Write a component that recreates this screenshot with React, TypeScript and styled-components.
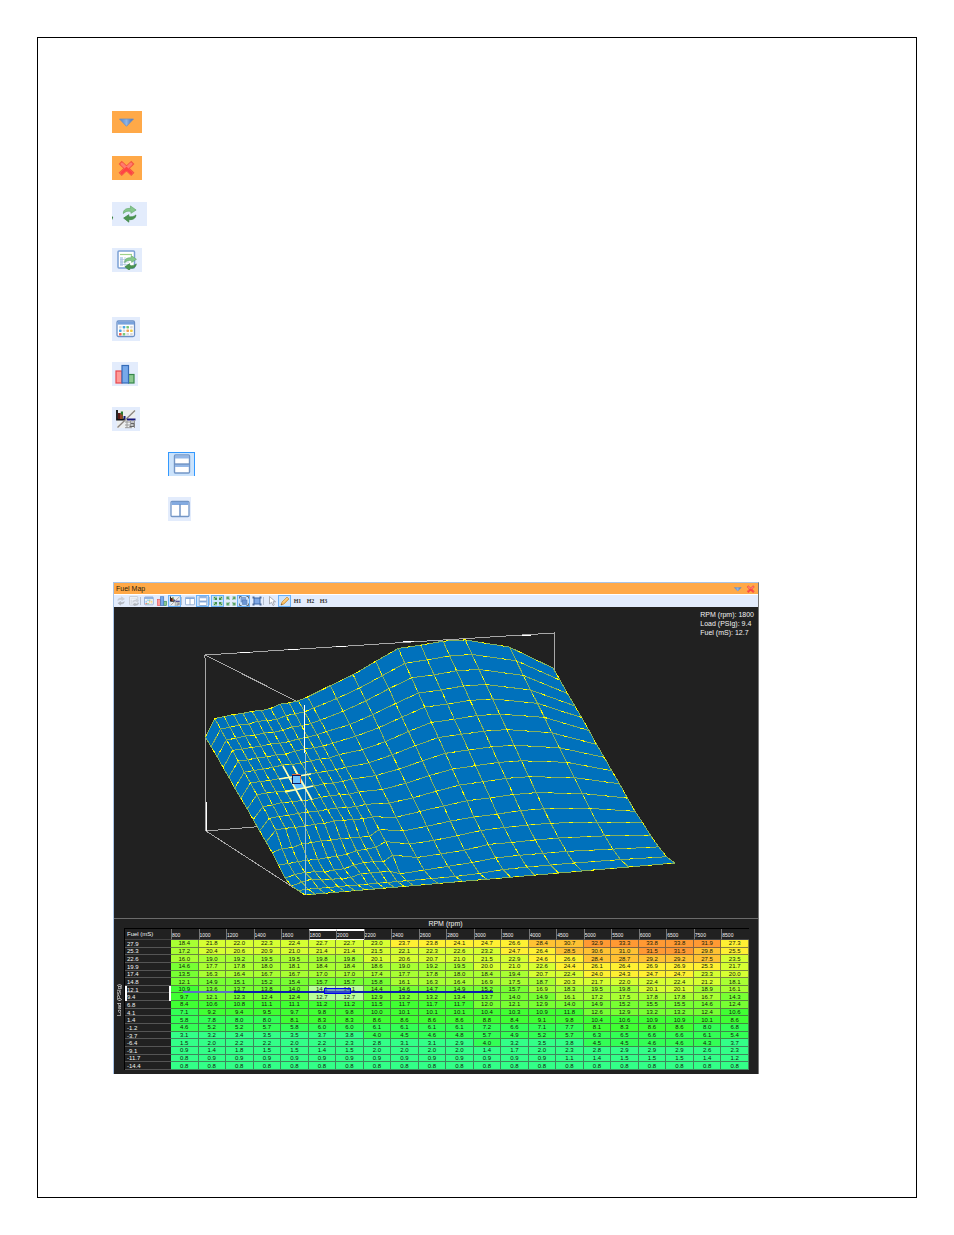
import React from "react";
import styled, { createGlobalStyle } from "styled-components";

const GlobalStyle = createGlobalStyle`
  * { box-sizing: border-box; }
  body { margin: 0; background: #fff; font-family: "Liberation Sans", Arial, sans-serif; }
`;

/* ---------- Data ---------- */

const RPM = [800, 1000, 1200, 1400, 1600, 1800, 2000, 2200, 2400, 2600, 2800, 3000, 3500, 4000, 4500, 5000, 5500, 6000, 6500, 7500, 8500];
const LOAD = [27.9, 25.3, 22.6, 19.9, 17.4, 14.8, 12.1, 9.4, 6.8, 4.1, 1.4, -1.2, -3.7, -6.4, -9.1, -11.7, -14.4];

const FUEL = `18.4 21.8 22.0 22.3 22.4 22.7 22.7 23.0 23.7 23.8 24.1 24.7 26.6 28.4 30.7 32.9 33.3 33.8 33.8 31.9 27.3
17.2 20.4 20.6 20.9 21.0 21.4 21.4 21.5 22.1 22.3 22.6 23.2 24.7 26.4 28.5 30.6 31.0 31.5 31.5 29.8 25.5
16.0 19.0 19.2 19.5 19.5 19.8 19.8 20.1 20.6 20.7 21.0 21.5 22.9 24.6 26.6 28.4 28.7 29.2 29.2 27.5 23.5
14.6 17.7 17.8 18.0 18.1 18.4 18.4 18.6 19.0 19.2 19.5 20.0 21.0 22.6 24.4 26.1 26.4 26.9 26.9 25.3 21.7
13.5 16.3 16.4 16.7 16.7 17.0 17.0 17.4 17.7 17.8 18.0 18.4 19.4 20.7 22.4 24.0 24.3 24.7 24.7 23.3 20.0
12.1 14.9 15.1 15.2 15.4 15.7 15.7 15.8 16.1 16.3 16.4 16.9 17.5 18.7 20.3 21.7 22.0 22.4 22.4 21.2 18.1
10.9 13.6 13.7 13.8 14.0 14.1 14.1 14.4 14.6 14.7 14.9 15.2 15.7 16.9 18.3 19.5 19.8 20.1 20.1 18.9 16.1
9.7 12.1 12.3 12.4 12.4 12.7 12.7 12.9 13.2 13.2 13.4 13.7 14.0 14.9 16.1 17.2 17.5 17.8 17.8 16.7 14.3
8.4 10.6 10.8 11.1 11.1 11.2 11.2 11.5 11.7 11.7 11.7 12.0 12.1 12.9 14.0 14.9 15.2 15.5 15.5 14.6 12.4
7.1 9.2 9.4 9.5 9.7 9.8 9.8 10.0 10.1 10.1 10.1 10.4 10.3 10.9 11.8 12.6 12.9 13.2 13.2 12.4 10.6
5.8 7.8 8.0 8.0 8.1 8.3 8.3 8.6 8.6 8.6 8.6 8.8 8.4 9.1 9.8 10.4 10.6 10.9 10.9 10.1 8.6
4.6 5.2 5.2 5.7 5.8 6.0 6.0 6.1 6.1 6.1 6.1 7.2 6.6 7.1 7.7 8.1 8.3 8.6 8.6 8.0 6.8
3.1 3.2 3.4 3.5 3.5 3.7 3.8 4.0 4.5 4.6 4.8 5.7 4.9 5.2 5.7 6.3 6.5 6.6 6.6 6.1 5.4
1.5 2.0 2.2 2.2 2.0 2.2 2.3 2.8 3.1 3.1 2.9 4.0 3.2 3.5 3.8 4.5 4.5 4.6 4.6 4.3 3.7
0.9 1.4 1.8 1.5 1.5 1.4 1.5 2.0 2.0 2.0 2.0 1.4 1.7 2.0 2.3 2.8 2.9 2.9 2.9 2.6 2.3
0.8 0.9 0.9 0.9 0.9 0.9 0.9 0.9 0.9 0.9 0.9 0.9 0.9 0.9 1.1 1.4 1.5 1.5 1.5 1.4 1.2
0.8 0.8 0.8 0.8 0.8 0.8 0.8 0.8 0.8 0.8 0.8 0.8 0.8 0.8 0.8 0.8 0.8 0.8 0.8 0.8 0.8`
  .split("\n")
  .map((row) => row.trim().split(" "));

const BANDS: [number, string][] = [
  [31.3, "#ff9933"],
  [27.4, "#ffc233"],
  [23.6, "#fff033"],
  [19.9, "#d6ff33"],
  [15.9, "#a8ff33"],
  [12, "#77ff33"],
  [8.1, "#40ff33"],
  [3.9, "#33ff55"],
];
const heat = (v: number) => (BANDS.find(([min]) => v >= min) ?? [0, "#33ff88"])[1] as string;

const isLiveColumn = (c: number) => c === 5 || c === 6;
const isLiveRow = (r: number) => r === 6 || r === 7;

/* ---------- Icons ---------- */

type IconProps = { size?: number };
const Svg = styled.svg`
  display: block;
  flex: none;
`;

const CollapseIcon = ({ size = 20 }: IconProps) => (
  <Svg width={size} height={size} viewBox="0 0 20 20" aria-hidden>
    <defs>
      <linearGradient id="tri" x1="0" x2="1">
        <stop offset="0" stopColor="#4d84cf" />
        <stop offset=".5" stopColor="#8db4e6" />
        <stop offset="1" stopColor="#3f66ae" />
      </linearGradient>
    </defs>
    <path d="M2.5 7H16.500L9.500 14.300Z" fill="url(#tri)" stroke="#6f8fc0" strokeWidth=".8" />
  </Svg>
);
const CloseIcon = ({ size = 20 }: IconProps) => (
  <Svg width={size} height={size} viewBox="0 0 20 20" aria-hidden>
    <path d="M4.8 6L14.2 14.800M14.2 6L4.8 14.800" stroke="#f4573f" strokeWidth="4.600" strokeLinecap="square" />
    <path d="M5 6L14 14.800M14 6L5 14.800" stroke="#ff7a6e" strokeWidth="3" strokeLinecap="round" />
    <path d="M9.500 10.400L14 14.800M9.500 10.400L5 14.800" stroke="#ff4343" strokeWidth="2.800" strokeLinecap="round" />
  </Svg>
);
const Arrows = () => (
  <>
    <path d="M3.5 9.5C3.5 5 7 3.8 11 4.2V1.5L17 5.8L11.5 9.3V7.2C8 6.8 6.2 7 3.5 9.5Z" fill="#86c88c" stroke="#62a86b" strokeWidth=".7" />
    <path d="M16.8 11C16.5 15 13 16.3 9.3 15.9V18.6L3.8 14.3L9.3 10.7V12.9C12.3 13.2 14.3 13 16.8 11Z" fill="#4c9550" stroke="#37803f" strokeWidth=".7" />
  </>
);
const RefreshIcon = ({ size = 20 }: IconProps) => (
  <Svg width={size} height={size} viewBox="0 0 20 20" aria-hidden>
    <Arrows />
  </Svg>
);
/* Refresh arrows with the tip of the neighbouring glyph showing at the left edge. */
const RefreshStrip = () => (
  <Svg width="35" height="24" viewBox="0 0 35 24" aria-hidden>
    <path d="M0 14L1.200 15.500L0 18Z" fill="#37803f" />
    <g transform="translate(8 2.500) scale(.95)">
      <Arrows />
    </g>
  </Svg>
);
const TableRefreshIcon = ({ size = 20 }: IconProps) => (
  <Svg width={size} height={size} viewBox="0 0 20 20" aria-hidden>
    <rect x="1" y="1" width="16.500" height="17" rx="1" fill="#fff" stroke="#7ba0d4" strokeWidth="1.500" />
    <path d="M3 4.500H15" stroke="#9fd18b" strokeWidth="1.200" />
    <path d="M3 7H6V16H3Z" fill="#c3d6ef" />
    <path d="M3 9.500H12M3 12H12M3 14.500H12M8 7V16" stroke="#a9c0e0" strokeWidth=".7" />
    <g transform="translate(4.500 4.200) scale(.88)">
      <Arrows />
    </g>
  </Svg>
);
const GridIcon = ({ size = 20 }: IconProps) => {
  const dots = ["#d9d9d9", "#47a5e4", "#78c878", "#d9d9d9", "#47a5e4", "#dcdcdc", "#f2a04e", "#f0cc3e", "#f26450", "#78c878", "#dcdcdc", "#d9d9d9"];
  return (
    <Svg width={size} height={size} viewBox="0 0 20 20" aria-hidden>
      <rect x="1" y="2" width="17.500" height="15.500" rx="1.500" fill="#fff" stroke="#6c90c6" strokeWidth="1.300" />
      <path d="M1.500 2.600H18V5.600H1.500Z" fill="#78a2dc" />
      {dots.map((c, i) => (
        <rect key={i} x={3 + (i % 4) * 3.7} y={7 + Math.floor(i / 4) * 3.5} width="2.600" height="2.400" rx=".6" fill={c} />
      ))}
    </Svg>
  );
};
const BarsIcon = ({ size = 20 }: IconProps) => (
  <Svg width={size} height={size} viewBox="0 0 20 20" aria-hidden>
    <rect x="1" y="7" width="6" height="12" fill="#ff9a97" stroke="#e8474d" strokeWidth="1.200" />
    <rect x="13.500" y="10.500" width="5.500" height="8.500" fill="#8cc98f" stroke="#36874a" strokeWidth="1.200" />
    <rect x="7" y="1.500" width="6.500" height="17.500" fill="#77a9ea" stroke="#356cb8" strokeWidth="1.200" />
  </Svg>
);
const SplitChartIcon = ({ size = 20 }: IconProps) => (
  <Svg width={size} height={size} viewBox="0 0 20 20" aria-hidden>
    <rect x="1" y="1" width="18" height="18" fill="#eceeef" />
    <path d="M1 1V10.500H9" fill="none" stroke="#111" strokeWidth="1.800" />
    <rect x="2" y="4" width="2.800" height="6" fill="#5b1a14" />
    <rect x="4.800" y="2.500" width="2.200" height="7.500" fill="#287a2c" />
    <rect x="4" y="5.500" width="2.600" height="4.500" fill="#9c4426" />
    <rect x="7.500" y="7" width="2" height="3.500" fill="#141a70" />
    <path d="M1.500 18.500L19 1.500" stroke="#8b8580" strokeWidth="1.300" />
    <path d="M11 10.500H19.500" stroke="#16167d" strokeWidth="2" />
    <path d="M9 13H19M9 16H19M11 11V19M14.500 11V19M18.500 11V19M9 18.700H16" stroke="#9a9a9a" strokeWidth="1" />
    <path d="M15 14.500H18V17.500H13.500" fill="none" stroke="#666" strokeWidth="1" />
  </Svg>
);
const RowsIcon = ({ size = 20 }: IconProps) => (
  <Svg width={size} height={size} viewBox="0 0 20 20" aria-hidden>
    <rect x="2.500" y="1" width="15" height="18" rx="1" fill="#fff" stroke="#7396c6" strokeWidth="1.400" />
    <path d="M3 1.700H17V4.500H3ZM3 10H17V13H3Z" fill="#94b7e6" />
    <path d="M2.500 10H17.500" stroke="#6a8dbf" strokeWidth="1.300" />
  </Svg>
);
const ColumnsIcon = ({ size = 20 }: IconProps) => (
  <Svg width={size} height={size} viewBox="0 0 20 20" aria-hidden>
    <rect x="1" y="2.500" width="18" height="15" rx="1" fill="#fff" stroke="#7396c6" strokeWidth="1.300" />
    <path d="M1.600 3H18.400V6H1.600Z" fill="#83aae0" />
    <path d="M10 5V17.500" stroke="#7394c4" strokeWidth="1.500" />
  </Svg>
);
const ArrowsInIcon = ({ size = 11 }: IconProps) => (
  <Svg width={size} height={size} viewBox="0 0 20 20" aria-hidden>
    <path d="M1 1H8V8H1ZM12 1H19V8H12ZM1 12H8V19H1ZM12 12H19V19H12Z" fill="#93c993" />
    <path d="M2 2L7 7M18 2L13 7M2 18L7 13M18 18L13 13M7 4V7H4M13 4V7H16M7 16V13H4M13 16V13H16" fill="none" stroke="#39874a" strokeWidth="1.800" />
  </Svg>
);
const ArrowsOutIcon = ({ size = 11 }: IconProps) => (
  <Svg width={size} height={size} viewBox="0 0 20 20" aria-hidden>
    <path d="M7 7L2 2M13 7L18 2M7 13L2 18M13 13L18 18M2 7V2H7M18 7V2H13M2 13V18H7M18 13V18H13" fill="none" stroke="#5ba462" strokeWidth="2.400" />
  </Svg>
);
const SelectIcon = ({ size = 11 }: IconProps) => (
  <Svg width={size} height={size} viewBox="0 0 20 20" aria-hidden>
    <rect x="4" y="3" width="9" height="9" fill="#84a8dc" stroke="#577eb6" />
    <rect x="7" y="8" width="9" height="9" fill="#6c96d4" stroke="#4d72aa" />
    <path d="M1 5V1H5M15 1H19V5M1 15V19H5M15 19H19V15" fill="none" stroke="#686e77" strokeWidth="2" />
  </Svg>
);
const SelectAllIcon = ({ size = 11 }: IconProps) => (
  <Svg width={size} height={size} viewBox="0 0 20 20" aria-hidden>
    <rect x="4" y="4" width="12" height="12" fill="#7fa7e4" stroke="#3f69aa" strokeWidth="2" />
    <path d="M1 1H5V5H1ZM15 1H19V5H15ZM1 15H5V19H1ZM15 15H19V19H15Z" fill="#4b6a9c" />
  </Svg>
);
const CursorIcon = ({ size = 11 }: IconProps) => (
  <Svg width={size} height={size} viewBox="0 0 20 20" aria-hidden>
    <path d="M5 1V16L9 12.500L12 19L14.500 17.500L12 11.500H17Z" fill="#fff" stroke="#8d929b" strokeWidth="1.500" />
  </Svg>
);
const PencilIcon = ({ size = 11 }: IconProps) => (
  <Svg width={size} height={size} viewBox="0 0 20 20" aria-hidden>
    <path d="M2 18L4 12L14 2L18 6L8 16Z" fill="#f5b95b" stroke="#c8862e" strokeWidth="1.300" />
    <path d="M6 13L15 4" stroke="#ffe0a0" strokeWidth="2" />
    <path d="M2 18L3 15L5 17Z" fill="#5a4630" />
  </Svg>
);

/* ---------- Document ---------- */

const Page = styled.main`
  margin: 37px;
  padding: 61px 157px 123px 74px;
  border: 1px solid #000;
`;
const IconList = styled.ul<{ $row: number }>`
  list-style: none;
  margin: 0 0 23px;
  padding: 0;
  display: grid;
  grid-auto-rows: ${(p) => p.$row}px;
  align-items: center;
`;
const IconItem = styled.li<{ $indent?: boolean }>`
  padding-left: ${(p) => (p.$indent ? 56 : 0)}px;
`;
const Swatch = styled.span<{ $w: number; $h?: number; $tone?: "orange" | "active" }>`
  display: flex;
  align-items: center;
  justify-content: center;
  overflow: hidden;
  width: ${(p) => p.$w}px;
  height: ${(p) => p.$h ?? 24}px;
  background: ${(p) => (p.$tone === "orange" ? "#ffa948" : p.$tone === "active" ? "#cbe3fc" : "#e3ecfc")};
  border: ${(p) => (p.$tone === "active" ? "1px solid #3399ff" : "none")};
  border-bottom: none;
`;

/* ---------- Fuel map panel ---------- */

const Panel = styled.section`
  margin: 51px 0 0 1px;
  border: 1px solid #a9c4e6;
  border-right-color: #777;
  border-bottom: 0;
  background: #212121;
  color: #f2f2f2;
`;
const TitleBar = styled.header`
  display: flex;
  align-items: center;
  height: 12px;
  padding: 0 1px 0 2px;
  background: #ffa948;
  border-bottom: 1px solid #fff;
`;
const Title = styled.h1`
  flex: 1;
  margin: 0;
  font-size: 7px;
  line-height: 12px;
  font-weight: 400;
  color: #2a1c08;
`;
const TitleButton = styled.button`
  display: grid;
  place-items: center;
  width: 13px;
  height: 11px;
  padding: 0;
  border: 0;
  background: none;
`;
const Toolbar = styled.div`
  display: flex;
  height: 12px;
  background: #e3ecfc;
`;
const ToolButton = styled.button<{ $active?: boolean; $dim?: boolean }>`
  display: grid;
  place-items: center;
  width: 13px;
  height: 12px;
  padding: 0;
  border: ${(p) => (p.$active ? "1px solid #6cb2f7" : "0")};
  background: ${(p) => (p.$active ? "#cbe3fc" : "none")};
  font: 700 6px/10px "Liberation Serif", serif;
  color: #333;
  & > svg {
    filter: ${(p) => (p.$dim ? "grayscale(1)" : "none")};
    opacity: ${(p) => (p.$dim ? 0.5 : 1)};
  }
`;
const Separator = styled.span`
  width: 2px;
  margin: 2px 0;
  border-left: 1px solid #b4bfd0;
`;

const Plot = styled.div`
  position: relative;
  border-bottom: 1px solid #6b6b6b;
`;
const PlotSvg = styled.svg`
  display: block;
  width: 100%;
`;
const Readout = styled.p`
  position: absolute;
  top: 3px;
  right: 4px;
  margin: 0;
  font-size: 7px;
  line-height: 9px;
  white-space: pre;
`;

/* Perspective projection of the unit box: x = engine speed, y = load, z = fuel. */
const project = (x: number, y: number, z: number): [number, number] => {
  const w = 1 + 0.045 * x + 0.0798 * y - 0.0008 * z;
  const px = (305 + 400.3 * x - 82.6 * y - 1.2 * z) / w;
  const py = (895 + 6.8 * x + 2.3 * y - 190.6 * z) / w;
  return [px, py];
};
const POINTS = FUEL.map((row, r) =>
  row.map((v, c) => project((RPM[c] - 800) / 7700, (LOAD[r] + 14.4) / 42.3, (Number(v) - 0.8) / 33))
);
const toPoints = (pts: [number, number][]) => pts.map(([x, y]) => `${x.toFixed(1)},${y.toFixed(1)}`).join(" ");

const Surface = () => {
  const rows = POINTS;
  const columns = RPM.map((_, c) => POINTS.map((row) => row[c]));
  const lines = [...rows, ...columns];
  const quads: [number, number][][] = [];
  for (let r = 0; r < LOAD.length - 1; r++)
    for (let c = 0; c < RPM.length - 1; c++)
      quads.push([POINTS[r][c], POINTS[r][c + 1], POINTS[r + 1][c + 1], POINTS[r + 1][c]]);
  return (
    <PlotSvg viewBox="114 607 644 311" role="img" aria-label="Fuel map surface">
      <g shapeRendering="crispEdges" fill="none">
        <path d="M554 668V633L205 655L206 831L305 895M206 831L554 802V668M205 655L304 705" stroke="#a8a8a8" />
        <path d="M240 652L250 652M288 650L298 649M336 646L346 646M403 642L414 641M522 635L531 635M206 802V831" stroke="#fff" />
        {quads.map((q, i) => (
          <polygon key={i} points={toPoints(q)} fill="#0071bc" stroke="#0071bc" />
        ))}
        {lines.map((l, i) => (
          <polyline key={i} points={toPoints(l)} stroke="#85b05c" />
        ))}
        {lines.map((l, i) => (
          <polyline key={i} points={toPoints(l)} stroke="#ffff00" strokeDasharray="4 15" strokeDashoffset={(i * 7) % 19} />
        ))}
        <path d="M304 705V753" stroke="#fff" />
        <path d="M305 753V895" stroke="#8fbfe3" />
      </g>
      <polygon points="290,777 300,776 306,788 296,790" fill="#5bb8ff" />
      <path d="M283 766L302 801M293 766L312 800M279 779L311 774M285 792L313 786" stroke="#ffffb0" strokeWidth="1.600" />
      <g shapeRendering="crispEdges">
        <rect x="292.500" y="775.500" width="8" height="8" fill="#6cc0ff" stroke="#101858" />
        <path d="M292 774.500H300M300.500 776V783" stroke="#e0703c" />
      </g>
    </PlotSvg>
  );
};

const DataArea = styled.div`
  display: grid;
  grid-template-columns: 10px 1fr;
  padding: 0 9px 4px 0;
`;
const AxisTop = styled.div`
  grid-column: 2;
  height: 10px;
  padding-left: 18px;
  border-bottom: 1px solid #000;
  font-size: 7px;
  line-height: 9px;
  text-align: center;
`;
const AxisSide = styled.div`
  grid-column: 1;
  display: flex;
  align-items: center;
  justify-content: center;
  font-size: 6px;
  line-height: 8px;
  white-space: nowrap;
  writing-mode: vertical-rl;
  transform: rotate(180deg);
`;
const TableWrap = styled.div`
  position: relative;
`;
const Table = styled.table`
  width: 100%;
  height: 141px;
  table-layout: fixed;
  border-spacing: 0;
  border-left: 1px solid #000;
  font-size: 6px;
  line-height: 6px;
  & col:first-child {
    width: 46px;
  }
`;
const ColHead = styled.th<{ $live?: boolean; $corner?: boolean }>`
  height: 11px;
  padding: ${(p) => (p.$corner ? "0 0 0 2px" : p.$live ? "0" : "2px 0 0")};
  overflow: hidden;
  border-left: ${(p) => (p.$corner ? "0" : "1px solid #777")};
  border-top: ${(p) => (p.$live ? "2px solid #fff" : "0 solid")};
  border-bottom: 1px solid ${(p) => (p.$live ? "#fff" : "#444")};
  font-size: ${(p) => (p.$corner ? 6 : 5)}px;
  font-weight: 400;
  text-align: left;
`;
const RowHead = styled.th<{ $live?: boolean }>`
  padding: 0 0 0 ${(p) => (p.$live ? 0 : 2)}px;
  border: 0 solid #fff;
  border-width: 0 ${(p) => (p.$live ? "2px 0 2px" : "0 0 0")};
  box-shadow: inset 0 -1px #555;
  font-weight: 400;
  text-align: left;
`;
const Cell = styled.td<{ $fill: string }>`
  padding: 0;
  background: ${(p) => p.$fill};
  border: 0 solid rgba(70, 70, 70, 0.65);
  border-width: 0 1px 1px 0;
  color: #122008;
  text-align: center;
`;
const Trace = styled.svg`
  position: absolute;
  inset: 0;
  width: 100%;
  height: 100%;
  pointer-events: none;
`;

const FuelTable = () => (
  <TableWrap>
    <Table>
      <colgroup>
        <col />
        {RPM.map((r) => (
          <col key={r} />
        ))}
      </colgroup>
      <thead>
        <tr>
          <ColHead scope="col" $corner>
            Fuel (mS)
          </ColHead>
          {RPM.map((rpm, c) => (
            <ColHead key={rpm} scope="col" $live={isLiveColumn(c)}>
              {rpm}
            </ColHead>
          ))}
        </tr>
      </thead>
      <tbody>
        {FUEL.map((row, r) => (
          <tr key={LOAD[r]}>
            <RowHead scope="row" $live={isLiveRow(r)}>
              {LOAD[r].toFixed(1)}
            </RowHead>
            {row.map((v, c) => (
              <Cell key={c} $fill={isLiveColumn(c) && isLiveRow(r) ? "#b9ff99" : heat(Number(v))}>
                {v}
              </Cell>
            ))}
          </tr>
        ))}
      </tbody>
    </Table>
    <Trace viewBox="124 929 625 141" preserveAspectRatio="none" shapeRendering="crispEdges" aria-hidden>
      <path d="M183 992H234" stroke="#5a70c8" strokeWidth="2" />
      <path d="M234 992H493" stroke="#0c1cb0" strokeWidth="2" />
      <rect x="324.500" y="988.500" width="26" height="5" fill="#4668d8" fillOpacity=".6" stroke="#0000f0" />
    </Trace>
  </TableWrap>
);

const App = () => (
  <>
    <GlobalStyle />
    <Page>
      <IconList $row={46}>
        <IconItem>
          <Swatch $w={30} $h={22} $tone="orange"><CollapseIcon /></Swatch>
        </IconItem>
        <IconItem>
          <Swatch $w={30} $tone="orange"><CloseIcon /></Swatch>
        </IconItem>
        <IconItem>
          <Swatch $w={35}><RefreshStrip /></Swatch>
        </IconItem>
        <IconItem>
          <Swatch $w={30}><TableRefreshIcon /></Swatch>
        </IconItem>
      </IconList>
      <IconList $row={45}>
        <IconItem>
          <Swatch $w={28}><GridIcon /></Swatch>
        </IconItem>
        <IconItem>
          <Swatch $w={26}><BarsIcon /></Swatch>
        </IconItem>
        <IconItem>
          <Swatch $w={28}><SplitChartIcon /></Swatch>
        </IconItem>
        <IconItem $indent>
          <Swatch $w={27} $tone="active"><RowsIcon /></Swatch>
        </IconItem>
        <IconItem $indent>
          <Swatch $w={23}><ColumnsIcon /></Swatch>
        </IconItem>
      </IconList>

      <Panel>
        <TitleBar>
          <Title>Fuel Map</Title>
          <TitleButton aria-label="Collapse"><CollapseIcon size={10} /></TitleButton>
          <TitleButton aria-label="Close"><CloseIcon size={10} /></TitleButton>
        </TitleBar>
        <Toolbar role="toolbar">
          <ToolButton $dim aria-label="Refresh"><RefreshIcon size={10} /></ToolButton>
          <ToolButton $dim aria-label="Refresh table"><TableRefreshIcon size={10} /></ToolButton>
          <Separator />
          <ToolButton aria-label="Table"><GridIcon size={10} /></ToolButton>
          <ToolButton aria-label="Graph"><BarsIcon size={10} /></ToolButton>
          <ToolButton $active aria-label="Table and graph"><SplitChartIcon size={10} /></ToolButton>
          <Separator />
          <ToolButton aria-label="Side by side"><ColumnsIcon size={10} /></ToolButton>
          <ToolButton $active aria-label="Stacked"><RowsIcon size={10} /></ToolButton>
          <Separator />
          <ToolButton $active aria-label="Fit"><ArrowsInIcon size={10} /></ToolButton>
          <ToolButton aria-label="Expand"><ArrowsOutIcon size={10} /></ToolButton>
          <ToolButton $active aria-label="Follow selection"><SelectIcon size={10} /></ToolButton>
          <ToolButton aria-label="Select all"><SelectAllIcon size={10} /></ToolButton>
          <Separator />
          <ToolButton aria-label="Pointer"><CursorIcon size={10} /></ToolButton>
          <ToolButton $active aria-label="Edit"><PencilIcon size={10} /></ToolButton>
          <ToolButton>H1</ToolButton>
          <ToolButton>H2</ToolButton>
          <ToolButton>H3</ToolButton>
        </Toolbar>
        <Plot>
          <Surface />
          <Readout>{"RPM (rpm): 1800\nLoad (PSIg): 9.4\nFuel (mS): 12.7"}</Readout>
        </Plot>
        <DataArea>
          <AxisTop>RPM (rpm)</AxisTop>
          <AxisSide>Load (PSIg)</AxisSide>
          <FuelTable />
        </DataArea>
      </Panel>
    </Page>
  </>
);

export default App;
